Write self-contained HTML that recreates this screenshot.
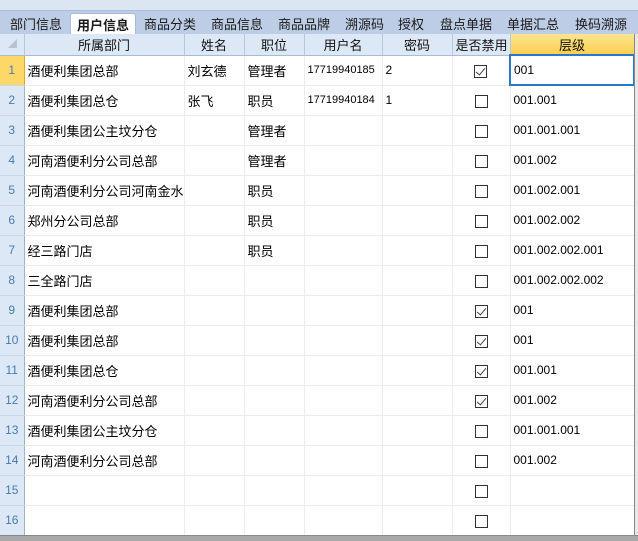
<!DOCTYPE html>
<html><head><meta charset="utf-8"><style>
*{margin:0;padding:0;box-sizing:border-box}
body{width:638px;height:541px;overflow:hidden;background:#fff;font-family:"Liberation Sans","Noto Sans CJK SC",sans-serif;font-size:13px;color:#000;position:relative}
.top{position:absolute;left:0;top:0;width:638px;height:10px;background:#dce6f3}
.tabs{position:absolute;left:0;top:10px;width:638px;height:24px;background:#bccde5;border-top:1px solid #a9bcd8}
.tab{position:absolute;top:3px;font-size:13px;color:#1a1a1a}
.tab.act{top:2px;height:22px;background:#fff;border:1px solid #aabcd6;border-bottom:none;border-radius:3px 3px 0 0;font-weight:bold;padding:1px 6px 0 6px}
table{position:absolute;left:0;top:34px;width:634px;border-collapse:collapse;table-layout:fixed}
td{border-right:1px solid #ececec;border-bottom:1px solid #ececec;height:30px;padding:0 3px;white-space:nowrap;overflow:hidden}
tr.h td{height:21px;background:#dce8f5;border-right:1px solid #b8c8dc;border-bottom:1px solid #a9bcd4;text-align:center;color:#111}
td.rn{background:#dce8f5;border-right:1px solid #9db3cf;border-bottom:1px solid #c8d6e8;color:#4a7ab0;font-size:12px;text-align:center;padding:0}
td.sel{background:#fdd768;border-right:1px solid #e0a82e}
tr.h td.lv{background:linear-gradient(#fee58f,#fbcf51);border-bottom:1px solid #e0b040}
.cb{display:inline-block;width:13px;height:13px;border:1px solid #333;vertical-align:middle;position:relative;background:#fff}
.cb.on::after{content:"";position:absolute;left:3px;top:0px;width:4px;height:8px;border:solid #444;border-width:0 1.5px 1.5px 0;transform:rotate(40deg)}
td.c{text-align:center}
td.n{font-size:12px}
td.u{font-size:11px}
.bot{position:absolute;left:0;top:535px;width:638px;height:6px;background:#a9a9a9;border-top:1px solid #888}
.rt{position:absolute;left:634px;top:34px;width:4px;height:502px;background:#e8e8e8;border-left:1px solid #888}
</style></head><body>
<div class="top"></div>
<div class="tabs">
<span class="tab" style="left:10px">部门信息</span>
<span class="tab act" style="left:70px">用户信息</span>
<span class="tab" style="left:144px">商品分类</span>
<span class="tab" style="left:211px">商品信息</span>
<span class="tab" style="left:278px">商品品牌</span>
<span class="tab" style="left:345px">溯源码</span>
<span class="tab" style="left:398px">授权</span>
<span class="tab" style="left:440px">盘点单据</span>
<span class="tab" style="left:507px">单据汇总</span>
<span class="tab" style="left:575px">换码溯源</span>
</div>
<table>
<colgroup><col style="width:24px"><col style="width:160px"><col style="width:60px"><col style="width:60px"><col style="width:78px"><col style="width:70px"><col style="width:58px"><col style="width:124px"></colgroup>
<tr class="h"><td class="rn" style="background:#dce8f5;border-bottom:1px solid #a9bcd4"><svg width="12" height="12"><path d="M11 2L11 11L2 11Z" fill="#b5c3d3"/></svg></td><td>所属部门</td><td>姓名</td><td>职位</td><td>用户名</td><td>密码</td><td>是否禁用</td><td class="lv">层级</td></tr>
<tr><td class="rn sel">1</td><td>酒便利集团总部</td><td>刘玄德</td><td>管理者</td><td class="u">17719940185</td><td class="n">2</td><td class="c"><span class="cb on"></span></td><td class="n" style="border:2px solid #2a78c8">001</td></tr>
<tr><td class="rn">2</td><td>酒便利集团总仓</td><td>张飞</td><td>职员</td><td class="u">17719940184</td><td class="n">1</td><td class="c"><span class="cb"></span></td><td class="n">001.001</td></tr>
<tr><td class="rn">3</td><td>酒便利集团公主坟分仓</td><td></td><td>管理者</td><td></td><td></td><td class="c"><span class="cb"></span></td><td class="n">001.001.001</td></tr>
<tr><td class="rn">4</td><td>河南酒便利分公司总部</td><td></td><td>管理者</td><td></td><td></td><td class="c"><span class="cb"></span></td><td class="n">001.002</td></tr>
<tr><td class="rn">5</td><td>河南酒便利分公司河南金水</td><td></td><td>职员</td><td></td><td></td><td class="c"><span class="cb"></span></td><td class="n">001.002.001</td></tr>
<tr><td class="rn">6</td><td>郑州分公司总部</td><td></td><td>职员</td><td></td><td></td><td class="c"><span class="cb"></span></td><td class="n">001.002.002</td></tr>
<tr><td class="rn">7</td><td>经三路门店</td><td></td><td>职员</td><td></td><td></td><td class="c"><span class="cb"></span></td><td class="n">001.002.002.001</td></tr>
<tr><td class="rn">8</td><td>三全路门店</td><td></td><td></td><td></td><td></td><td class="c"><span class="cb"></span></td><td class="n">001.002.002.002</td></tr>
<tr><td class="rn">9</td><td>酒便利集团总部</td><td></td><td></td><td></td><td></td><td class="c"><span class="cb on"></span></td><td class="n">001</td></tr>
<tr><td class="rn">10</td><td>酒便利集团总部</td><td></td><td></td><td></td><td></td><td class="c"><span class="cb on"></span></td><td class="n">001</td></tr>
<tr><td class="rn">11</td><td>酒便利集团总仓</td><td></td><td></td><td></td><td></td><td class="c"><span class="cb on"></span></td><td class="n">001.001</td></tr>
<tr><td class="rn">12</td><td>河南酒便利分公司总部</td><td></td><td></td><td></td><td></td><td class="c"><span class="cb on"></span></td><td class="n">001.002</td></tr>
<tr><td class="rn">13</td><td>酒便利集团公主坟分仓</td><td></td><td></td><td></td><td></td><td class="c"><span class="cb"></span></td><td class="n">001.001.001</td></tr>
<tr><td class="rn">14</td><td>河南酒便利分公司总部</td><td></td><td></td><td></td><td></td><td class="c"><span class="cb"></span></td><td class="n">001.002</td></tr>
<tr><td class="rn">15</td><td></td><td></td><td></td><td></td><td></td><td class="c"><span class="cb"></span></td><td></td></tr>
<tr><td class="rn">16</td><td></td><td></td><td></td><td></td><td></td><td class="c"><span class="cb"></span></td><td></td></tr>
</table>
<div class="rt"></div>
<div class="bot"></div>
</body></html>
